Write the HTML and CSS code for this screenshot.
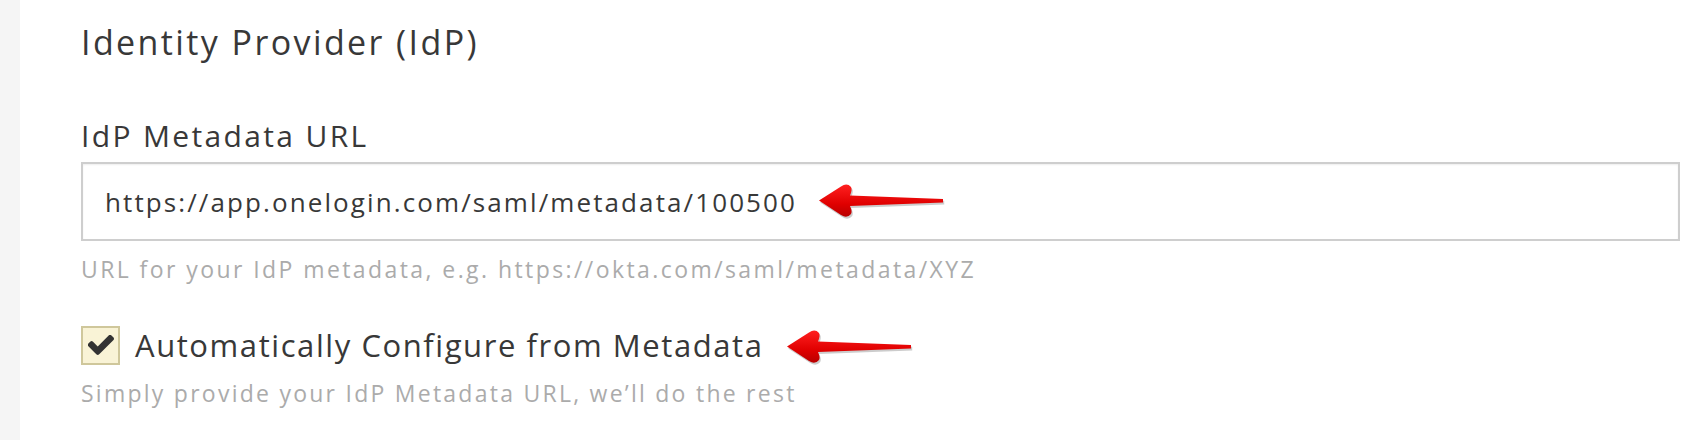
FILE: index.html
```html
<!DOCTYPE html>
<html lang="en">
<head>
<meta charset="utf-8">
<title>Identity Provider (IdP)</title>
<link rel="stylesheet" href="styles.css">
</head>
<body>
<div class="page">
  <aside class="sidebar"></aside>
  <main class="main">
    <h2 class="section-title">Identity Provider (IdP)</h2>

    <label class="field-label" for="idp-url">IdP Metadata URL</label>
    <div class="input-wrap">
      <input id="idp-url" class="text-input" type="text" value="https://app.onelogin.com/saml/metadata/100500" readonly>
      <svg class="arrow arrow-url" width="130" height="38" viewBox="0 0 130 38" aria-hidden="true">
        <defs>
          <linearGradient id="ag1" x1="0" y1="0" x2="0" y2="1">
            <stop offset="0" stop-color="#ff2020"/>
            <stop offset="0.6" stop-color="#e00000"/>
            <stop offset="1" stop-color="#b80000"/>
          </linearGradient>
        </defs>
        <path d="M3,19 L25,5 Q31,1 35,5.5 Q36.5,8 34,14 L127,17.4 L127,21 L34,24.5 Q36.5,30 35,32.5 Q31,37.5 25,33.5 Z" fill="#6e6e6e" opacity="0.35" transform="translate(1.2,1.4)"/>
        <path d="M3,18.5 L25,4.5 Q31,0.5 35,5 Q36.5,7.5 34,13.5 L127,17 L127,20.4 L34,24 Q36.5,29.5 35,32 Q31,37 25,33 Z" fill="url(#ag1)"/>
      </svg>
    </div>
    <p class="help">URL for your IdP metadata, e.g. https://okta.com/saml/metadata/XYZ</p>

    <div class="check-row">
      <span class="checkbox" aria-checked="true" role="checkbox">
        <svg width="26" height="21" viewBox="141 402 1530 1124" aria-hidden="true">
          <path d="M1671 566q0 40-28 68l-724 724-136 136q-28 28-68 28t-68-28l-136-136-362-362q-28-28-28-68t28-68l136-136q28-28 68-28t68 28l294 295 656-657q28-28 68-28t68 28l136 136q28 28 28 68z" fill="#333"/>
        </svg>
      </span>
      <span class="check-label">Automatically Configure from Metadata</span>
      <svg class="arrow arrow-check" width="130" height="38" viewBox="0 0 130 38" aria-hidden="true">
        <defs>
          <linearGradient id="ag2" x1="0" y1="0" x2="0" y2="1">
            <stop offset="0" stop-color="#ff2020"/>
            <stop offset="0.6" stop-color="#e00000"/>
            <stop offset="1" stop-color="#b80000"/>
          </linearGradient>
        </defs>
        <path d="M3,19 L25,5 Q31,1 35,5.5 Q36.5,8 34,14 L127,17.4 L127,21 L34,24.5 Q36.5,30 35,32.5 Q31,37.5 25,33.5 Z" fill="#6e6e6e" opacity="0.35" transform="translate(1.2,1.4)"/>
        <path d="M3,18.5 L25,4.5 Q31,0.5 35,5 Q36.5,7.5 34,13.5 L127,17 L127,20.4 L34,24 Q36.5,29.5 35,32 Q31,37 25,33 Z" fill="url(#ag2)"/>
      </svg>
    </div>
    <p class="help help-check">Simply provide your IdP Metadata URL, we’ll do the rest</p>
  </main>
</div>
</body>
</html>
```

FILE: styles.css
```css
* { box-sizing: border-box; }

html, body {
  margin: 0;
  padding: 0;
  background: #fff;
}

body {
  font-family: "Open Sans", "DejaVu Sans", sans-serif;
  color: #333;
}

.page {
  display: flex;
  min-height: 440px;
}

.sidebar {
  flex: 0 0 20px;
  background: #f5f5f5;
}

.main {
  flex: 1;
  padding: 22px 20px 0 61px;
}

.section-title {
  margin: 0 0 56px;
  font-size: 34px;
  line-height: 40px;
  font-weight: 400;
  letter-spacing: 2.4px;
  color: #383838;
}

.field-label {
  display: block;
  margin: 0 0 8px;
  font-size: 30px;
  line-height: 36px;
  font-weight: 400;
  letter-spacing: 2.35px;
  color: #383838;
}

.input-wrap {
  position: relative;
}

.text-input {
  display: block;
  width: 100%;
  height: 79px;
  margin: 0;
  padding: 0 22px;
  border: 2px solid #cecece;
  border-radius: 0;
  box-shadow: inset 0 1px 2px rgba(0, 0, 0, 0.07);
  background: #fff;
  font-family: "Open Sans", "DejaVu Sans", sans-serif;
  font-size: 26px;
  font-weight: 400;
  letter-spacing: 2.1px;
  color: #383838;
  outline: none;
}

.arrow {
  position: absolute;
  overflow: visible;
}

.arrow-url {
  left: 735px;
  top: 20px;
}

.help {
  margin: 13px 0 0;
  font-size: 23px;
  line-height: 30px;
  letter-spacing: 2.42px;
  color: #ababab;
}

.check-row {
  position: relative;
  display: flex;
  align-items: center;
  gap: 15px;
  height: 40px;
  margin-top: 41px;
}

.checkbox {
  display: flex;
  align-items: center;
  justify-content: center;
  width: 39px;
  height: 39px;
  border: 2px solid #cfc79b;
  background: #f9f3d6;
}

.check-label {
  font-size: 31px;
  line-height: 40px;
  font-weight: 400;
  letter-spacing: 1.57px;
  color: #383838;
}

.arrow-check {
  left: 703px;
  top: 3px;
}

.help-check {
  margin-top: 13px;
  letter-spacing: 2.25px;
}
```
